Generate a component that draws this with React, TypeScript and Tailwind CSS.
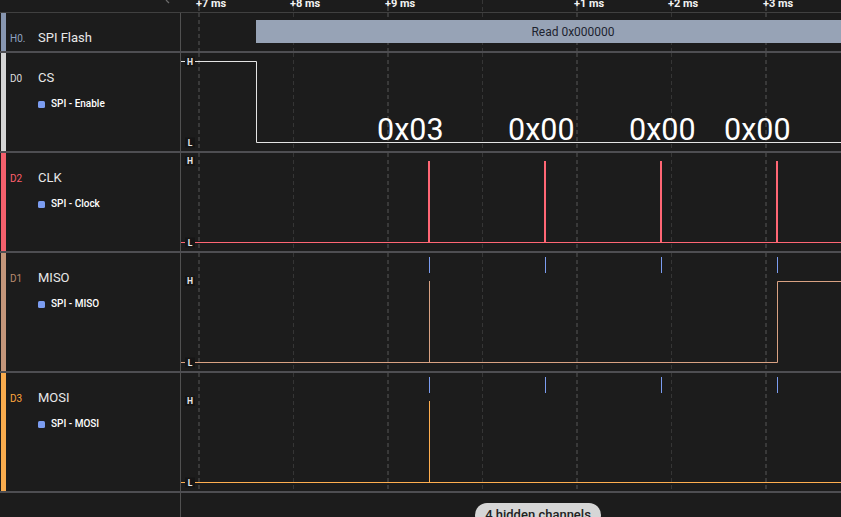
import type { ReactNode } from 'react'

const GRID = [18, 112.5, 207, 301.5, 396, 490.5, 585]
const EDGES = [248, 364, 480, 596]
const TIME = [
  { x: 196, t: '+7 ms' },
  { x: 290, t: '+8 ms' },
  { x: 385, t: '+9 ms' },
  { x: 574, t: '+1 ms' },
  { x: 668, t: '+2 ms' },
  { x: 763, t: '+3 ms' },
]

function Grid({ h }: { h: number }) {
  return (
    <g>
      {GRID.map((x, i) => (
        <line
          key={x}
          x1={x}
          x2={x}
          y1={0}
          y2={h}
          stroke={i % 2 === 0 ? '#393939' : '#353535'}
          strokeWidth={i % 2 === 0 ? 2 : 1}
          strokeDasharray="4 3"
        />
      ))}
    </g>
  )
}

function Level({ y, t }: { y: number; t: string }) {
  return (
    <g>
      <rect x={4} y={y - 5} width={10} height={10} fill="#151515" />
      <text x={9} y={y + 3} textAnchor="middle" fontSize={8.5} fontWeight={700} fill="#e8e8e8">
        {t}
      </text>
    </g>
  )
}

function Ticks() {
  return (
    <g>
      {EDGES.map((x) => (
        <line key={x} x1={x + 0.5} x2={x + 0.5} y1={4} y2={20} stroke="#7b9cf0" strokeWidth={1} />
      ))}
    </g>
  )
}

function Label({
  accent,
  tag,
  tagColor,
  name,
  sub,
}: {
  accent: string
  tag: string
  tagColor: string
  name: string
  sub?: string
}) {
  return (
    <div className="flex w-[181px] shrink-0 border-r border-[#505050]">
      <div className={`ml-px w-[5px] ${accent}`} />
      <div className="flex-1 pt-[17px]">
        <div className="flex items-baseline">
          <span className={`w-[32px] pl-[4px] text-[10px] ${tagColor}`}>{tag}</span>
          <span className="text-[13px] leading-[16px] text-[#e8e8e8]">{name}</span>
        </div>
        {sub && (
          <div className="ml-[32px] mt-[12px] flex items-center gap-[6px]">
            <span className="h-[7px] w-[7px] rounded-[1.5px] bg-[#7b9cf0]" />
            <span className="text-[10px] font-medium leading-[12px] text-white">{sub}</span>
          </div>
        )}
      </div>
    </div>
  )
}

function Row({ h, label, children }: { h: string; label: ReactNode; children: ReactNode }) {
  return (
    <div className={`flex border-b-2 border-[#4e4e52] ${h}`}>
      {label}
      <div className="flex-1 overflow-hidden">{children}</div>
    </div>
  )
}

export default function App() {
  return (
    <div className="h-[517px] w-[841px] overflow-hidden bg-[#1c1c1c] font-['Roboto',sans-serif]">
      {/* Time ruler */}
      <div className="h-[13px] border-b border-[#404040]">
        <svg width={841} height={12} className="block">
          {GRID.map((x, i) => (
            <line
              key={x}
              x1={x + 181}
              x2={x + 181}
              y1={0}
              y2={12}
              stroke={i % 2 === 0 ? '#3c3c3c' : '#363636'}
              strokeWidth={i % 2 === 0 ? 2 : 1}
              strokeDasharray="4 3"
            />
          ))}
          <path d="M166 0 L169 3" stroke="#6a6a6a" strokeWidth={1.2} fill="none" />
          {TIME.map((m) => (
            <text key={m.t} x={m.x} y={7} fontSize={11} fontWeight={700} fill="#f2f2f2">
              {m.t}
            </text>
          ))}
        </svg>
      </div>

      {/* H0 SPI Flash */}
      <Row
        h="h-[40px]"
        label={<Label accent="bg-[#8796b0]" tag="H0." tagColor="text-[#8fa3c2]" name="SPI Flash" />}
      >
        <svg width={660} height={38} className="block">
          <Grid h={38} />
          <rect x={75} y={7} width={585} height={23} fill="#97a3b6" />
          <text x={392} y={22.5} textAnchor="middle" fontSize={12} fill="#1d2330">
            Read 0x000000
          </text>
        </svg>
      </Row>

      {/* D0 CS */}
      <Row
        h="h-[100px]"
        label={<Label accent="bg-[#d4d4d4]" tag="D0" tagColor="text-[#dcdcdc]" name="CS" sub="SPI - Enable" />}
      >
        <svg width={660} height={98} className="block">
          <Grid h={98} />
          <path d="M0 8.5 H75.5 V89.5 H660" stroke="#e4e4e4" strokeWidth={1} fill="none" />
          <Level y={8.5} t="H" />
          <Level y={89.5} t="L" />
          {[
            { x: 196, t: '0x03' },
            { x: 327, t: '0x00' },
            { x: 448, t: '0x00' },
            { x: 543, t: '0x00' },
          ].map((b, i) => (
            <text key={i} x={b.x} y={86.5} fontSize={30.5} fill="#ffffff">
              {b.t}
            </text>
          ))}
        </svg>
      </Row>

      {/* D2 CLK */}
      <Row
        h="h-[100px]"
        label={<Label accent="bg-[#f4606c]" tag="D2" tagColor="text-[#ff5f6d]" name="CLK" sub="SPI - Clock" />}
      >
        <svg width={660} height={98} className="block">
          <Grid h={98} />
          <line x1={0} x2={660} y1={89.5} y2={89.5} stroke="#ff6674" strokeWidth={1} />
          {EDGES.map((x) => (
            <rect key={x} x={x - 1} y={8} width={2} height={82} fill="#ff6674" />
          ))}
          <Level y={8} t="H" />
          <Level y={89.5} t="L" />
        </svg>
      </Row>

      {/* D1 MISO */}
      <Row
        h="h-[120px]"
        label={<Label accent="bg-[#c4967a]" tag="D1" tagColor="text-[#b98a6e]" name="MISO" sub="SPI - MISO" />}
      >
        <svg width={660} height={118} className="block">
          <Grid h={118} />
          <Ticks />
          <path d="M0 109.5 H596.5 V28.5 H660" stroke="#d9a283" strokeWidth={1} fill="none" />
          <line x1={248.5} x2={248.5} y1={28} y2={109} stroke="#d9a283" strokeWidth={1} />
          <Level y={28} t="H" />
          <Level y={109.5} t="L" />
        </svg>
      </Row>

      {/* D3 MOSI */}
      <Row
        h="h-[120px]"
        label={<Label accent="bg-[#f9ab4d]" tag="D3" tagColor="text-[#ffa63c]" name="MOSI" sub="SPI - MOSI" />}
      >
        <svg width={660} height={118} className="block">
          <Grid h={118} />
          <Ticks />
          <line x1={0} x2={660} y1={109.5} y2={109.5} stroke="#ffae4f" strokeWidth={1} />
          <line x1={248.5} x2={248.5} y1={28} y2={109} stroke="#ffae4f" strokeWidth={1} />
          <Level y={28} t="H" />
          <Level y={109.5} t="L" />
        </svg>
      </Row>

      {/* Hidden channels */}
      <div className="flex h-[24px]">
        <div className="w-[181px] shrink-0 border-r border-[#505050]" />
        <div className="flex-1 pl-[294px] pt-[10px]">
          <div className="flex h-[24px] w-[126px] items-center justify-center rounded-full bg-[#d6d6d6] text-[13px] font-medium text-[#222]">
            4 hidden channels
          </div>
        </div>
      </div>
    </div>
  )
}
